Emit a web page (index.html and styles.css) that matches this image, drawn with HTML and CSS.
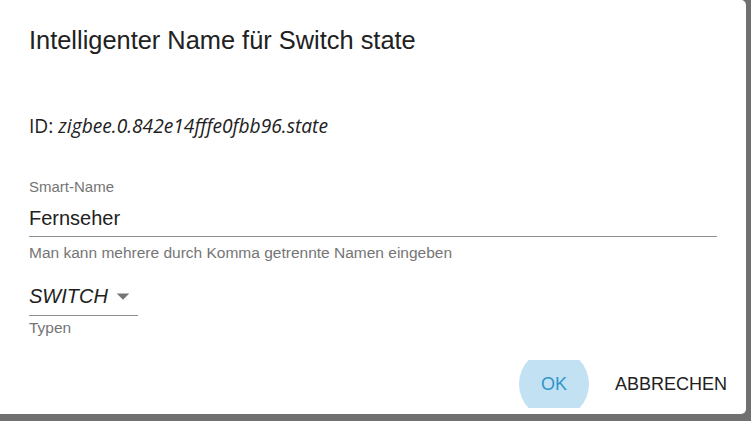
FILE: index.html
```html
<!DOCTYPE html>
<html>
<head>
<meta charset="utf-8">
<link rel="stylesheet" href="styles.css">
</head>
<body>
<div class="dialog">
  <h2 class="title">Intelligenter Name für Switch state</h2>
  <div class="content">
    <p class="id">ID: <i>zigbee.0.842e14fffe0fbb96.state</i></p>
    <div class="field">
      <label class="label">Smart-Name</label>
      <div class="input">Fernseher</div>
      <div class="helper">Man kann mehrere durch Komma getrennte Namen eingeben</div>
    </div>
    <div class="select-field">
      <div class="select"><span class="value">SWITCH</span><svg class="arrow" width="30" height="30" viewBox="0 0 24 24"><path d="M7 10l5 5 5-5z" fill="#757575"/></svg></div>
      <div class="helper small-gap">Typen</div>
    </div>
  </div>
  <div class="actions">
    <button class="btn ok"><span>OK</span></button>
    <button class="btn">ABBRECHEN</button>
  </div>
</div>
</body>
</html>
```
FILE: styles.css
```css
html, body {
  margin: 0;
  padding: 0;
}
body {
  background: #707070;
  width: 751px;
  height: 421px;
  overflow: hidden;
  font-family: "Liberation Sans", Arial, sans-serif;
}
.dialog {
  width: 746px;
  height: 414px;
  background: #fff;
  border-radius: 0 5px 5px 0;
  display: flex;
  flex-direction: column;
}
.title {
  margin: 0;
  padding: 20px 29px 0;
  font-size: 25.4px;
  line-height: 40px;
  font-weight: 400;
  color: #212121;
}
.content {
  padding: 0 29px;
  flex: 1;
}
.id {
  margin: 54px 0 0;
  font-family: "Open Sans", sans-serif;
  font-size: 19.2px;
  line-height: 24px;
  color: #212121;
}
.field {
  margin-top: 41px;
  display: flex;
  flex-direction: column;
}
.label {
  font-size: 15px;
  line-height: 16px;
  color: #757575;
}
.input {
  margin-top: 11px;
  font-size: 20px;
  line-height: 24px;
  padding-bottom: 6px;
  border-bottom: 1px solid #8f8f8f;
  color: #212121;
}
.helper {
  font-size: 15.5px;
  line-height: 16px;
  color: #757575;
  margin-top: 8px;
}
.select-field {
  margin-top: 23px;
  display: flex;
  flex-direction: column;
  align-items: flex-start;
}
.select {
  width: 109px;
  height: 24px;
  padding-bottom: 7px;
  display: flex;
  align-items: center;
  border-bottom: 1px solid #8f8f8f;
  position: relative;
}
.value {
  font-size: 20px;
  line-height: 24px;
  font-style: italic;
  color: #212121;
}
.arrow {
  position: absolute;
  right: 0;
  top: -3px;
}
.small-gap {
  margin-top: 4px;
}
.actions {
  display: flex;
  justify-content: flex-end;
  align-items: center;
  gap: 11px;
  padding: 0 9px 6px 0;
}
.btn {
  border: none;
  background: none;
  font-family: "Liberation Sans", Arial, sans-serif;
  font-size: 18px;
  color: #212121;
  height: 48px;
  min-width: 80px;
  padding: 0 10px;
  cursor: pointer;
}
.ok {
  width: 80px;
  color: #2f96cc;
  position: relative;
  overflow: hidden;
}
.ok::before {
  content: "";
  position: absolute;
  left: 5px;
  top: -11px;
  width: 70px;
  height: 70px;
  border-radius: 50%;
  background: #c2e1f2;
}
.ok span {
  position: relative;
}
```
